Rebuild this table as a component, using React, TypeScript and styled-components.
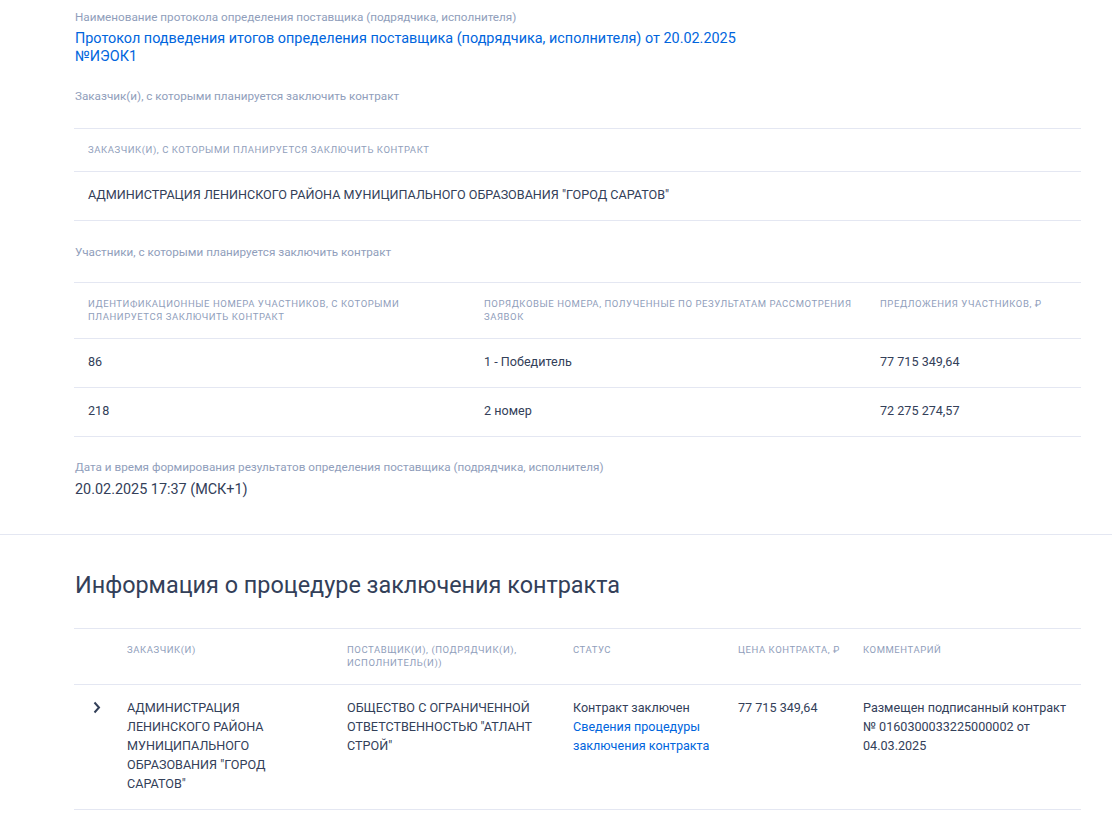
import * as React from 'react';
import styled, { createGlobalStyle } from 'styled-components';

const TEXT = '#334059';
const MUTED = '#909ebb';
const LINK = '#0065dd';
const LINE = '#e4e7f2';

const GlobalStyle = createGlobalStyle`
  body {
    margin: 0;
    background: #ffffff;
    font-family: Roboto, "Noto Sans", Arial, sans-serif;
    color: ${TEXT};
  }
`;

const Section = styled.section<{ $top: number; $bottom: number }>`
  padding: ${p => p.$top}px 31px ${p => p.$bottom}px 74px;
`;

const Divider = styled.div`
  border-top: 1px solid ${LINE};
`;

const Label = styled.div<{ $gap?: number }>`
  font-size: 11.7px;
  line-height: 16px;
  color: ${MUTED};
  margin-top: ${p => p.$gap || 0}px;
  padding-left: 1px;
`;

const LinkValue = styled.a`
  display: block;
  margin-top: 5px;
  padding-left: 1px;
  font-size: 14.4px;
  line-height: 18px;
  color: ${LINK};
  text-decoration: none;
`;

const Value = styled.div`
  margin-top: 5px;
  padding-left: 1px;
  font-size: 14.4px;
  line-height: 20px;
  color: ${TEXT};
`;

const Table = styled.div<{ $cols: string; $gap: number }>`
  display: grid;
  grid-template-columns: ${p => p.$cols};
  margin-top: ${p => p.$gap}px;
  border-top: 1px solid ${LINE};
`;

const HeadCell = styled.div<{ $nowrap?: boolean }>`
  padding: 14px 14px 15px;
  font-size: 9.5px;
  line-height: 13px;
  letter-spacing: 0.06em;
  text-transform: uppercase;
  white-space: ${p => (p.$nowrap ? 'nowrap' : 'normal')};
  color: ${MUTED};
  border-bottom: 1px solid ${LINE};
`;

const Cell = styled.div`
  padding: 13px 14px 16px;
  font-size: 12.6px;
  line-height: 19px;
  color: ${TEXT};
  border-bottom: 1px solid ${LINE};
`;

const CellLink = styled.a`
  display: block;
  color: ${LINK};
  text-decoration: none;
`;

const ToggleCell = styled(Cell)`
  padding-left: 16px;
  padding-right: 0;
`;

const Toggle = styled.button`
  display: block;
  width: 14px;
  height: 19px;
  padding: 0;
  border: 0;
  background: none;
  cursor: pointer;
`;

const Heading = styled.h2`
  margin: 0;
  padding-left: 1px;
  font-size: 23.4px;
  line-height: 32px;
  font-weight: 400;
  color: ${TEXT};
`;

const participants = [
  { id: '86', order: '1 - Победитель', offer: '77 715 349,64' },
  { id: '218', order: '2 номер', offer: '72 275 274,57' },
];

export default function App() {
  return (
    <>
      <GlobalStyle />
      <Section $top={9} $bottom={34}>
        <Label>Наименование протокола определения поставщика (подрядчика, исполнителя)</Label>
        <LinkValue href="#">
          Протокол подведения итогов определения поставщика (подрядчика, исполнителя) от 20.02.2025
          <br />
          №ИЭОК1
        </LinkValue>

        <Label $gap={22}>Заказчик(и), с которыми планируется заключить контракт</Label>
        <Table $cols="1fr" $gap={24}>
          <HeadCell>Заказчик(и), с которыми планируется заключить контракт</HeadCell>
          <Cell>АДМИНИСТРАЦИЯ ЛЕНИНСКОГО РАЙОНА МУНИЦИПАЛЬНОГО ОБРАЗОВАНИЯ "ГОРОД САРАТОВ"</Cell>
        </Table>

        <Label $gap={23}>Участники, с которыми планируется заключить контракт</Label>
        <Table $cols="396px 396px 1fr" $gap={22}>
          <HeadCell>Идентификационные номера участников, с которыми планируется заключить контракт</HeadCell>
          <HeadCell>Порядковые номера, полученные по результатам рассмотрения заявок</HeadCell>
          <HeadCell>Предложения участников, ₽</HeadCell>
          {participants.map(p => (
            <React.Fragment key={p.id}>
              <Cell>{p.id}</Cell>
              <Cell>{p.order}</Cell>
              <Cell>{p.offer}</Cell>
            </React.Fragment>
          ))}
        </Table>

        <Label $gap={22}>Дата и время формирования результатов определения поставщика (подрядчика, исполнителя)</Label>
        <Value>20.02.2025 17:37 (МСК+1)</Value>
      </Section>

      <Divider />

      <Section $top={34} $bottom={24}>
        <Heading>Информация о процедуре заключения контракта</Heading>
        <Table $cols="39px 220px 226px 165px 125px 1fr" $gap={27}>
          <HeadCell />
          <HeadCell>Заказчик(и)</HeadCell>
          <HeadCell>Поставщик(и), (подрядчик(и), исполнитель(и))</HeadCell>
          <HeadCell>Статус</HeadCell>
          <HeadCell $nowrap>Цена контракта, ₽</HeadCell>
          <HeadCell>Комментарий</HeadCell>

          <ToggleCell>
            <Toggle aria-label="Развернуть">
              <svg width="14" height="19" viewBox="0 0 14 19">
                <path d="M4.5 4.5 L9 9.5 L4.5 14.5" fill="none" stroke={TEXT} strokeWidth="2" />
              </svg>
            </Toggle>
          </ToggleCell>
          <Cell>АДМИНИСТРАЦИЯ ЛЕНИНСКОГО РАЙОНА МУНИЦИПАЛЬНОГО ОБРАЗОВАНИЯ "ГОРОД САРАТОВ"</Cell>
          <Cell>ОБЩЕСТВО С ОГРАНИЧЕННОЙ ОТВЕТСТВЕННОСТЬЮ "АТЛАНТ СТРОЙ"</Cell>
          <Cell>
            Контракт заключен
            <CellLink href="#">Сведения процедуры заключения контракта</CellLink>
          </Cell>
          <Cell>77 715 349,64</Cell>
          <Cell>Размещен подписанный контракт № 0160300033225000002 от 04.03.2025</Cell>
        </Table>
      </Section>
    </>
  );
}
